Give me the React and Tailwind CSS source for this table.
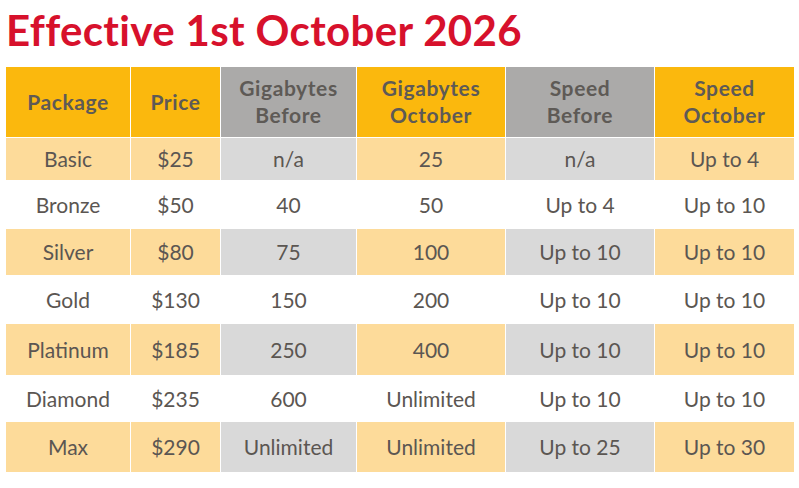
import React from "react";

const columns = [
  { label: ["Package"], width: "w-[124px]", tone: "orange" },
  { label: ["Price"], width: "w-[89px]", tone: "orange" },
  { label: ["Gigabytes", "Before"], width: "w-[135px]", tone: "grey" },
  { label: ["Gigabytes", "October"], width: "w-[148px]", tone: "orange" },
  { label: ["Speed", "Before"], width: "w-[148px]", tone: "grey" },
  { label: ["Speed", "October"], width: "w-[139px]", tone: "orange" },
];

const rows = [
  { h: "h-[42px]", cells: ["Basic", "$25", "n/a", "25", "n/a", "Up to 4"] },
  { h: "h-[49px]", cells: ["Bronze", "$50", "40", "50", "Up to 4", "Up to 10"] },
  { h: "h-[46px]", cells: ["Silver", "$80", "75", "100", "Up to 10", "Up to 10"] },
  { h: "h-[49px]", cells: ["Gold", "$130", "150", "200", "Up to 10", "Up to 10"] },
  { h: "h-[51px]", cells: ["Platinum", "$185", "250", "400", "Up to 10", "Up to 10"] },
  { h: "h-[47px]", cells: ["Diamond", "$235", "600", "Unlimited", "Up to 10", "Up to 10"] },
  { h: "h-[50px]", cells: ["Max", "$290", "Unlimited", "Unlimited", "Up to 25", "Up to 30"] },
];

const App = () => {
  return (
    <div className="w-[799px] h-[488px] bg-white overflow-hidden font-['Lato','Liberation_Sans',sans-serif]">
      <h1 className="pl-[6px] pt-[6px] h-[67px] text-[42px] leading-[48px] font-bold text-[#d7112c] tracking-[0.35px]">
        Effective 1st October 2026
      </h1>

      <div className="ml-[6px] w-[788px] flex flex-col">
        <div className="flex gap-px h-[70px] mb-px">
          {columns.map((col, i) => (
            <div
              key={i}
              className={
                col.width +
                " flex flex-col items-center justify-center pb-[2px] text-[21px] leading-[27px] font-bold tracking-[0.6px] text-[#5e5a56] " +
                (col.tone === "orange" ? "bg-[#fbb80d]" : "bg-[#abaaa9]")
              }
            >
              {col.label.map((line) => (
                <span key={line}>{line}</span>
              ))}
            </div>
          ))}
        </div>

        {rows.map((row, r) => (
          <div key={r} className={row.h + " flex gap-px " + (r % 2 === 0 ? "" : "bg-white")}>
            {row.cells.map((cell, c) => {
              let bg = "bg-white";
              if (r % 2 === 0) {
                bg = columns[c].tone === "orange" ? "bg-[#fddb9a]" : "bg-[#d9d9d9]";
              }
              return (
                <div
                  key={c}
                  className={
                    columns[c].width +
                    " flex items-center justify-center text-[21px] text-[#5b5652] " +
                    bg
                  }
                >
                  {cell}
                </div>
              );
            })}
          </div>
        ))}
      </div>
    </div>
  );
};

export default App;
